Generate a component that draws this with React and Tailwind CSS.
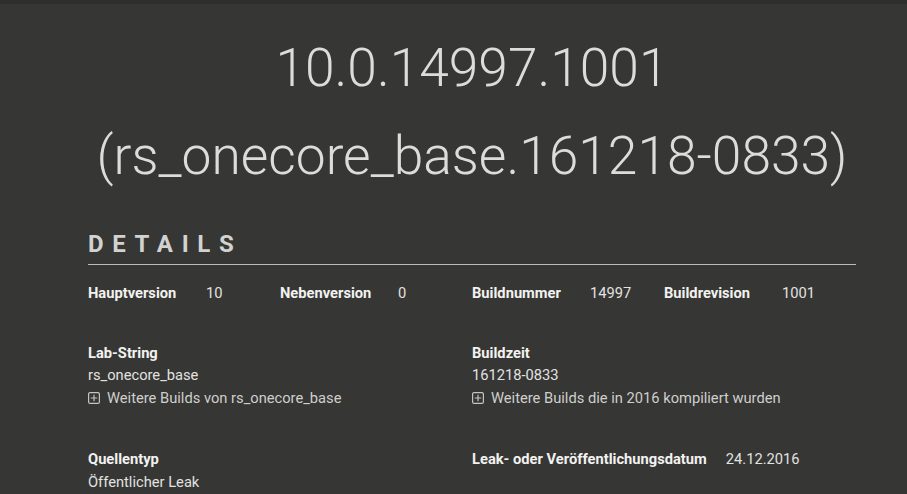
import React from 'react';

const PlusBox = () => (
  <svg width="12" height="12" viewBox="0 0 12 12" className="shrink-0 mr-[7px]" fill="none" stroke="#c4c4c2" strokeWidth="1.2">
    <rect x="0.6" y="0.6" width="10.8" height="10.8" rx="1.5" />
    <path d="M6 2.8v6.4M2.8 6h6.4" />
  </svg>
);

const Pair = ({ label, value, labelWidth = 'w-[118px]' }) => (
  <div className="flex">
    <span className={`${labelWidth} font-bold text-[#f2f2f0]`}>{label}</span>
    <span className="text-[#e2e2e0]">{value}</span>
  </div>
);

const Block = ({ label, value, link }) => (
  <div className="flex flex-col">
    <span className="font-bold text-[#f2f2f0]">{label}</span>
    <span className="text-[#e2e2e0]">{value}</span>
    {link && (
      <span className="flex items-center text-[#cfcfcd]">
        <PlusBox />
        {link}
      </span>
    )}
  </div>
);

export default function App() {
  return (
    <div
      className="min-h-[494px] bg-[#363634] border-t-4 border-[#2e2e2c] overflow-hidden"
      style={{ fontFamily: 'Roboto, "Liberation Sans", sans-serif' }}
    >
      <div className="ml-[88px] w-[768px]">
        <h1 className="mt-[20px] text-center text-[53.3px] leading-[88px] font-light text-[#dcdcda] whitespace-nowrap">
          10.0.14997.1001
          <br />
          (rs_onecore_base.161218-0833)
        </h1>

        <h2 className="mt-[28px] pb-[4px] border-b border-[#bcbcba] text-[24px] leading-[32px] font-bold tracking-[0.36em] text-[#d2d2d0]">
          DETAILS
        </h2>

        <div className="text-[14.7px] leading-[22.5px]">
          <div className="mt-[17px] grid grid-cols-4">
            <Pair label="Hauptversion" value="10" />
            <Pair label="Nebenversion" value="0" />
            <Pair label="Buildnummer" value="14997" />
            <Pair label="Buildrevision" value="1001" />
          </div>

          <div className="mt-[37px] grid grid-cols-2">
            <Block label="Lab-String" value="rs_onecore_base" link="Weitere Builds von rs_onecore_base" />
            <Block label="Buildzeit" value="161218-0833" link="Weitere Builds die in 2016 kompiliert wurden" />
          </div>

          <div className="mt-[39px] grid grid-cols-2">
            <Block label="Quellentyp" value="Öffentlicher Leak" />
            <div className="flex">
              <span className="font-bold text-[#f2f2f0] mr-[19px]">Leak- oder Veröffentlichungsdatum</span>
              <span className="text-[#e2e2e0]">24.12.2016</span>
            </div>
          </div>
        </div>
      </div>
    </div>
  );
}
